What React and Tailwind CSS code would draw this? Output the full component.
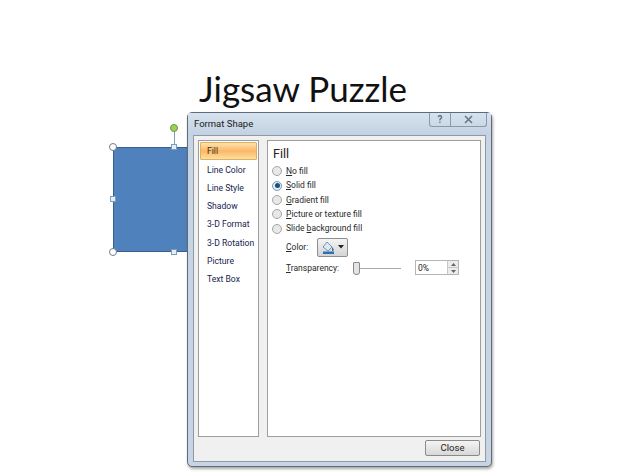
const font = { fontFamily: 'Roboto, "Open Sans", sans-serif' };

function Handle({ className }) {
  return <div className={"absolute border " + className} />;
}

function Radio({ checked, label }) {
  return (
    <div className="flex h-[14.4px] items-center">
      <div className={"flex h-[10px] w-[10px] items-center justify-center rounded-full border bg-[#e8e8e8] " + (checked ? "border-[#6f9ec6]" : "border-[#a4a4a4]")}>
        {checked && <div className="h-[5px] w-[5px] rounded-full bg-[#1d4e78]" />}
      </div>
      <span className="ml-[4px]">{label}</span>
    </div>
  );
}

export default function App() {
  const items = ["Line Color", "Line Style", "Shadow", "3-D Format", "3-D Rotation", "Picture", "Text Box"];
  return (
    <div className="relative h-[472px] w-[627px] overflow-hidden bg-white" style={font}>
      <h1 className="absolute left-[199px] top-[65px] text-[35px] leading-[46px] text-[#111]" style={{ fontFamily: 'Lato, sans-serif' }}>
        Jigsaw Puzzle
      </h1>

      <div className="absolute left-[113px] top-[147px] h-[105px] w-[90px] border border-[#3a5f8c] bg-[#4f81bd]" />
      <div className="absolute left-[174px] top-[131px] h-[16px] w-px bg-[#7f9db9]" />
      <div className="absolute left-[170px] top-[124px] h-[8px] w-[8px] rounded-full border border-[#6a9a3a] bg-[#9bd05a]" />
      <Handle className="left-[109px] top-[143px] h-[8px] w-[8px] rounded-full border-[#6f7f8f] bg-white" />
      <Handle className="left-[109px] top-[248px] h-[8px] w-[8px] rounded-full border-[#6f7f8f] bg-white" />
      <Handle className="left-[171px] top-[144px] h-[6px] w-[6px] border-[#7f9db9] bg-[#e4eef8]" />
      <Handle className="left-[171px] top-[249px] h-[6px] w-[6px] border-[#7f9db9] bg-[#e4eef8]" />
      <Handle className="left-[110px] top-[196px] h-[6px] w-[6px] border-[#7f9db9] bg-[#e4eef8]" />

      <div className="absolute left-[187px] top-[112px] flex h-[355px] w-[305px] flex-col rounded-[5px] border border-[#5f6b78] bg-[#c6d4e3] shadow-[1px_2px_3px_rgba(0,0,0,0.35)]">
        <div className="relative flex h-[22px] shrink-0 items-center bg-gradient-to-b from-[#d6e2ee] to-[#c3d2e2] pl-[6px] text-[9.5px] text-[#1a1a1a]">
          Format Shape
          <div className="absolute right-[4px] top-0 flex h-[14px] w-[58px] overflow-hidden rounded-b-[3px] border border-t-0 border-[#8a98a8] text-[#5b6673]">
            <div className="flex w-[21px] items-center justify-center border-r border-[#8a98a8] text-[10px] font-semibold leading-none">?</div>
            <div className="flex flex-1 items-center justify-center">
              <svg width="9" height="9" viewBox="0 0 9 9" fill="none" stroke="#6b7683" strokeWidth="1.6">
                <path d="M1 1l7 7M8 1L1 8" />
              </svg>
            </div>
          </div>
        </div>

        <div className="mx-[5px] flex flex-1 flex-col border border-[#8f9aa6] bg-[#f0f0f0] px-[4px] pt-[4px]">
          <div className="flex gap-[8px]">
            <div className="flex h-[297px] w-[61px] flex-col border border-[#9d9d9d] bg-white p-px text-[8.6px] text-[#16224f]">
              <div className="flex h-[18px] shrink-0 items-center rounded-[1px] border border-[#e0b060] bg-gradient-to-b from-[#fde3ab] via-[#fbb765] to-[#fde0a0] pl-[6px] text-[#3a2a10]">
                Fill
              </div>
              <div className="flex flex-col pt-px">
                {items.map((t) => (
                  <div key={t} className="flex h-[18.25px] items-center pl-[7px]">{t}</div>
                ))}
              </div>
            </div>

            <div className="h-[297px] flex-1 border border-[#9d9d9d] bg-white pl-[4px] pt-[5px] text-[8.5px] text-[#2a2a2a]">
              <div className="mb-[2px] ml-px h-[16px] text-[12.5px] leading-[16px] text-[#222]">Fill</div>
              <div className="flex flex-col">
                <Radio label={<><u>N</u>o fill</>} />
                <Radio checked label={<><u>S</u>olid fill</>} />
                <Radio label={<><u>G</u>radient fill</>} />
                <Radio label={<><u>P</u>icture or texture fill</>} />
                <Radio label={<>Slide <u>b</u>ackground fill</>} />
              </div>
              <div className="mt-[1.5px] flex h-[20px] items-center pl-[14px]">
                <span className="w-[31px]"><u>C</u>olor:</span>
                <div className="flex h-[19px] w-[31px] items-center justify-center gap-[3px] rounded-[2px] border border-[#8e8e8e] bg-gradient-to-b from-[#f4f4f4] to-[#d4d4d4]">
                  <svg width="13" height="13" viewBox="0 0 13 13">
                    <path d="M5 1l5 5-4 4-5-4z" fill="#dfe8f2" stroke="#5a7fa8" strokeWidth="0.8" />
                    <path d="M1 10.500h11V13H1z" fill="#2f6fb5" />
                    <path d="M10 6c1.500 1.500 2 2.500 1.500 3.500S10 10 10 9z" fill="#2f6fb5" />
                  </svg>
                  <svg width="6" height="4" viewBox="0 0 6 4"><path d="M0 0h6L3 3.500z" fill="#222" /></svg>
                </div>
              </div>
              <div className="mt-[3px] flex h-[15px] items-center pl-[14px]">
                <span className="w-[67px]"><u>T</u>ransparency:</span>
                <div className="relative h-[12px] w-[48px]">
                  <div className="absolute left-0 top-[6px] h-px w-full bg-[#a8a8a8]" />
                  <div className="absolute left-0 top-0 h-[13px] w-[7px] rounded-b-[3px] rounded-t-[1px] border border-[#8a8a8a] bg-[#e4e4e4]" />
                </div>
                <div className="ml-[14px] flex h-[15px] w-[44px] items-center justify-between border border-[#b5b5b5] pl-[2px] text-[#222]">
                  0%
                  <div className="flex h-full w-[11px] flex-col border-l border-[#c8c8c8] bg-[#ececec]">
                    <div className="flex flex-1 items-center justify-center border-b border-[#c8c8c8]">
                      <svg width="5" height="3" viewBox="0 0 5 3"><path d="M2.500 0L5 3H0z" fill="#666" /></svg>
                    </div>
                    <div className="flex flex-1 items-center justify-center">
                      <svg width="5" height="3" viewBox="0 0 5 3"><path d="M0 0h5L2.500 3z" fill="#666" /></svg>
                    </div>
                  </div>
                </div>
              </div>
            </div>
          </div>
          <div className="mr-px mt-[3px] flex justify-end">
            <div className="flex h-[16px] w-[55px] items-center justify-center rounded-[2px] border border-[#8a8a8a] bg-gradient-to-b from-[#f4f4f4] to-[#d8d8d8] text-[9.5px] text-[#222]">
              Close
            </div>
          </div>
        </div>
        <div className="h-[4px] shrink-0" />
      </div>
    </div>
  );
}
